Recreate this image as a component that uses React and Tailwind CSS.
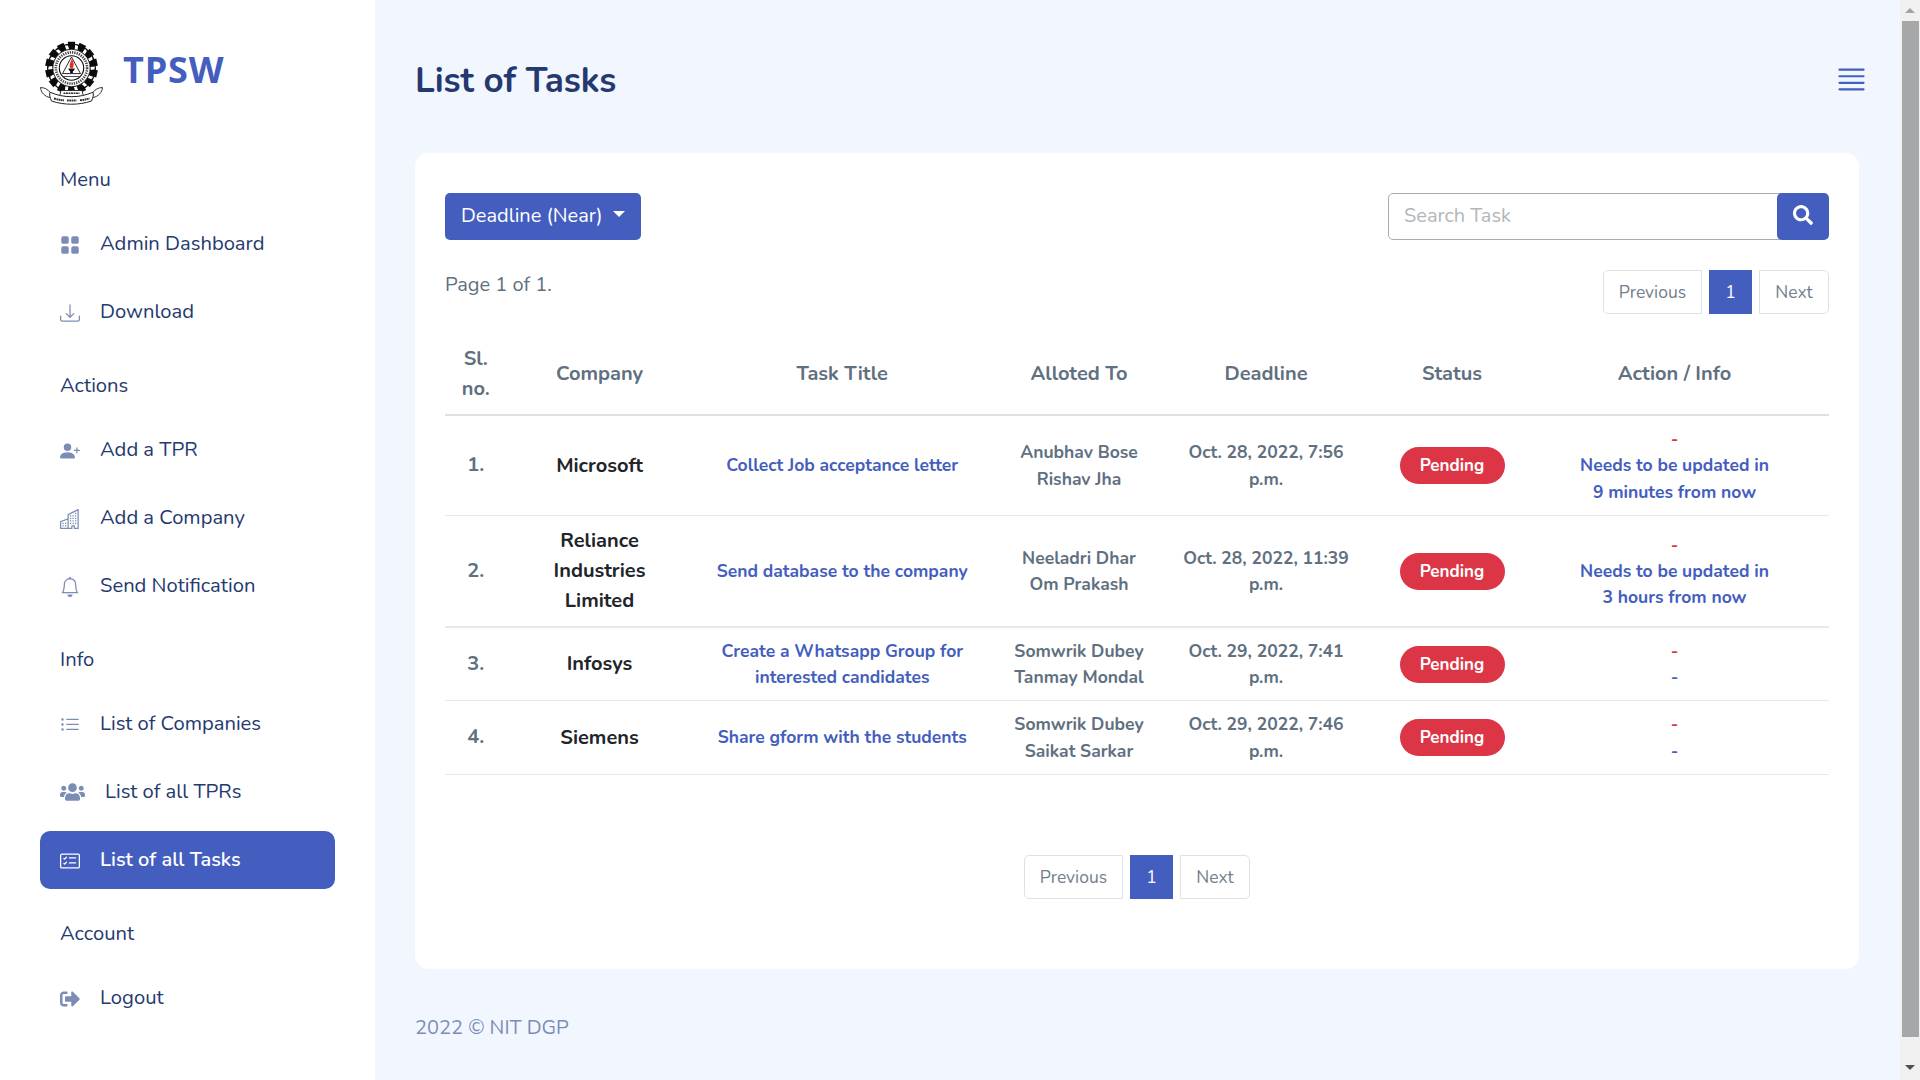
import { BsGridFill, BsDownload, BsPersonPlusFill, BsBuildings, BsBell, BsListUl, BsCardChecklist, BsJustify } from "react-icons/bs";
import { FaUsers, FaSignOutAlt, FaSearch } from "react-icons/fa";

const sections = [
  { title: "Menu", items: [
    { label: "Admin Dashboard", Icon: BsGridFill },
    { label: "Download", Icon: BsDownload },
  ] },
  { title: "Actions", items: [
    { label: "Add a TPR", Icon: BsPersonPlusFill },
    { label: "Add a Company", Icon: BsBuildings },
    { label: "Send Notification", Icon: BsBell },
  ] },
  { title: "Info", items: [
    { label: "List of Companies", Icon: BsListUl },
    { label: "List of all TPRs", Icon: FaUsers, wide: true },
    { label: "List of all Tasks", Icon: BsCardChecklist, active: true },
  ] },
  { title: "Account", items: [{ label: "Logout", Icon: FaSignOutAlt }] },
];

const columns = [["Sl.", "no."], ["Company"], ["Task Title"], ["Alloted To"], ["Deadline"], ["Status"], ["Action / Info"]];

const tasks = [
  { company: ["Microsoft"], title: ["Collect Job acceptance letter"], people: ["Anubhav Bose", "Rishav Jha"], deadline: ["Oct. 28, 2022, 7:56", "p.m."], info: ["Needs to be updated in", "9 minutes from now"], row: "h-[100px] border-b" },
  { company: ["Reliance", "Industries", "Limited"], title: ["Send database to the company"], people: ["Neeladri Dhar", "Om Prakash"], deadline: ["Oct. 28, 2022, 11:39", "p.m."], info: ["Needs to be updated in", "3 hours from now"], row: "h-[112px] border-b-2" },
  { company: ["Infosys"], title: ["Create a Whatsapp Group for", "interested candidates"], people: ["Somwrik Dubey", "Tanmay Mondal"], deadline: ["Oct. 29, 2022, 7:41", "p.m."], info: ["-"], row: "h-[73px] border-b" },
  { company: ["Siemens"], title: ["Share gform with the students"], people: ["Somwrik Dubey", "Saikat Sarkar"], deadline: ["Oct. 29, 2022, 7:46", "p.m."], info: ["-"], row: "h-[74px] border-b" },
];

const GRID = "grid grid-cols-[61.5px_186px_299.5px_174px_200px_172px_273px] items-center text-center";

function Lines({ lines }) {
  return lines.map((line) => <div key={line} className="whitespace-nowrap">{line}</div>);
}

function Logo() {
  const teeth = Array.from({ length: 14 }, (_, i) => (i * 360) / 14);
  return (
    <svg className="size-[74px] shrink-0" viewBox="0 0 74 74" fill="none">
      <circle cx="35.5" cy="32" r="21.5" stroke="#0b0b0b" strokeWidth="6" />
      {teeth.map((a) => (
        <path key={a} transform={`rotate(${a} 35.5 32)`} d="M31.8 5.800h7.400l-.6 5h-6.200z" fill="#0b0b0b" />
      ))}
      {teeth.map((a) => (
        <path key={a} transform={`rotate(${a + 12.86} 35.5 32)`} d="M34 8.600l3 .6.4 3.600-2.900.6z" fill="#fff" />
      ))}
      <circle cx="35.5" cy="32" r="18.6" fill="#fff" stroke="#0b0b0b" strokeWidth=".8" />
      <circle cx="35.5" cy="32" r="15.600" stroke="#444" strokeWidth="2.600" strokeDasharray="1.300 1" />
      <circle cx="35.5" cy="32" r="12.200" fill="#fff" stroke="#0b0b0b" strokeWidth="1.100" />
      <path d="M35.500 21 26.500 37.600h18z" stroke="#111" strokeWidth=".9" />
      <path d="M35.900 22.500c2.200 4.200 2.200 7 1 9.500h-2.600c-1.700-3 .3-5.500 1.600-9.500z" fill="#e0342b" />
      <path d="M32.300 32.500h6.600l-1 2.200-1 .4v1.900h-2.800V35l-1-.4z" fill="#111" />
      <path d="M27.500 40.500h16" stroke="#222" strokeWidth=".8" />
      <path d="M25 54.500h21l1.500 6.500h-24z" fill="#fff" stroke="#222" strokeWidth=".9" />
      <path d="M27.500 57.300h16" stroke="#333" strokeWidth="1.500" strokeDasharray="2 .5" />
      <path d="M14 61.500C8.500 60.500 5 56.500 4.500 51.500c4 .2 7 1.500 9.500 4.800M57 61.500c5.500-1 9-5 9.500-10-4 .2-7 1.500-9.500 4.800" fill="#fff" stroke="#222" strokeWidth=".9" />
      <path d="M14 56.200c13.500 6 29.500 6 43 0 .8 2.200.2 5.200-1.500 8.800-12.500 4.300-27.500 4.300-40 0-1.700-3.600-2.300-6.600-1.500-8.800z" fill="#fff" stroke="#222" strokeWidth="1" />
      <path d="M18 62.500c4 1.100 7 1.600 10 1.800M31 64.500h9.500M44 64.200c3.500-.3 6.500-.9 9.500-1.800" stroke="#333" strokeWidth="2" strokeDasharray="1.800 .5" />
    </svg>
  );
}

function Pagination() {
  return (
    <div className="flex h-11 gap-[7px] text-[17.5px] text-[#727e8c]">
      <div className="flex w-[99px] items-center justify-center rounded-l-[5px] border border-[#dee2e6]">Previous</div>
      <div className="flex w-[43px] items-center justify-center bg-[#435ebe] text-white">1</div>
      <div className="flex w-[70px] items-center justify-center rounded-r-[5px] border border-[#dee2e6]">Next</div>
    </div>
  );
}

function Sidebar() {
  return (
    <aside className="w-[375px] shrink-0 bg-white pl-10 text-[20.2px] leading-[30px] text-[#25396f]">
      <div className="-ml-1 flex h-[135px] items-start pt-9">
        <Logo />
        <span className="ml-[13px] mt-[9px] font-['Open_Sans',sans-serif] text-[36px] font-bold leading-[50px] tracking-[0.8px] text-[#435ebe]">TPSW</span>
      </div>
      {sections.map(({ title, items }) => (
        <section key={title} className="w-[295px] pt-[30px]">
          <h2 className="mb-5 pl-5">{title}</h2>
          <div className="flex flex-col gap-[10px]">
            {items.map(({ label, Icon, wide, active }) => (
              <div key={label} className={active ? "flex h-[58px] items-center rounded-[10px] bg-[#435ebe] pl-5 text-[20px] font-semibold text-white" : "flex h-[58px] items-center pl-5"}>
                <Icon className={wide ? "h-5 w-[25px] text-[#7c8db5]" : active ? "mt-[2px] size-5" : "mt-[1px] size-5 text-[#7c8db5]"} />
                <span className="ml-5">{label}</span>
              </div>
            ))}
          </div>
        </section>
      ))}
    </aside>
  );
}

function TaskTable() {
  return (
    <div className="mt-[18px] w-[1384px] font-bold text-[#607080]">
      <div className={`${GRID} h-[84px] border-b-2 border-[#dfe0e3] pt-[2px] text-[20px] leading-[30px]`}>
        {columns.map((c) => (
          <div key={c[0]}><Lines lines={c} /></div>
        ))}
      </div>
      {tasks.map((t, i) => (
        <div key={t.title[0]} className={`${GRID} ${t.row} border-[#e8e9ec] text-[17.5px] leading-[26.25px]`}>
          <div className="text-[20px]">{i + 1}.</div>
          <div className="text-[20px] leading-[30px] text-[#212529]"><Lines lines={t.company} /></div>
          <div className="text-[#435ebe]"><Lines lines={t.title} /></div>
          <div><Lines lines={t.people} /></div>
          <div><Lines lines={t.deadline} /></div>
          <div className="flex justify-center">
            <span className="flex h-[37px] w-[105px] items-center justify-center rounded-full bg-[#dc3545] pt-[2px] text-[17px] text-white">Pending</span>
          </div>
          <div className="text-[#435ebe]">
            <div className="text-[#dc3545]">-</div>
            <Lines lines={t.info} />
          </div>
        </div>
      ))}
    </div>
  );
}

export default function App() {
  return (
    <div className="flex h-[1080px] w-[1920px] overflow-hidden bg-[#f2f7ff] font-[Nunito,Lato,sans-serif]">
      <Sidebar />
      <main className="flex w-[1525px] flex-col pl-10 text-[20px] text-[#607080]">
        <header className="flex h-[153px] items-start justify-between pr-[31px] pt-[59px]">
          <h1 className="text-[35px] font-bold leading-[44px] text-[#25396f]">List of Tasks</h1>
          <BsJustify className="mt-[3px] size-[35px] text-[#435ebe]" />
        </header>
        <section className="flex h-[816px] w-[1444px] flex-col rounded-[14px] bg-white px-[30px] pt-10">
          <div className="flex h-[47px] justify-between">
            <button className="flex w-[196px] items-center gap-[10px] rounded-[5px] bg-[#435ebe] pb-[2px] pl-4 text-white">
              Deadline (Near)
              <span className="-mt-[3px] border-x-[6px] border-t-[6px] border-x-transparent border-t-white" />
            </button>
            <div className="flex">
              <div className="-mr-1 flex w-[393px] items-center rounded-l-[5px] border border-[#a9acb0] pb-[2px] pl-[15px] text-[#b2b6bb]">Search Task</div>
              <button className="flex w-[52px] items-center justify-center rounded-[5px] bg-[#435ebe] pb-[4px] text-white"><FaSearch className="size-5" /></button>
            </div>
          </div>
          <div className="mt-[30px] flex items-start justify-between">
            <p className="leading-[30px]">Page 1 of 1.</p>
            <Pagination />
          </div>
          <TaskTable />
          <div className="mt-20 flex justify-center"><Pagination /></div>
        </section>
        <footer className="mt-[44px] leading-[30px] text-[#7c8db5]">2022 © NIT DGP</footer>
      </main>
      <div className="flex w-5 flex-col items-center bg-[#f1f1f1]">
        <div className="flex h-[21px] items-center"><span className="border-x-[5px] border-b-[5px] border-x-transparent border-b-[#a3a3a3]" /></div>
        <div className="h-[1016px] w-[17px] bg-[#a6a7a9]" />
        <div className="flex flex-1 items-center pt-[18px]"><span className="border-x-[5px] border-t-[5px] border-x-transparent border-t-[#505050]" /></div>
      </div>
    </div>
  );
}
